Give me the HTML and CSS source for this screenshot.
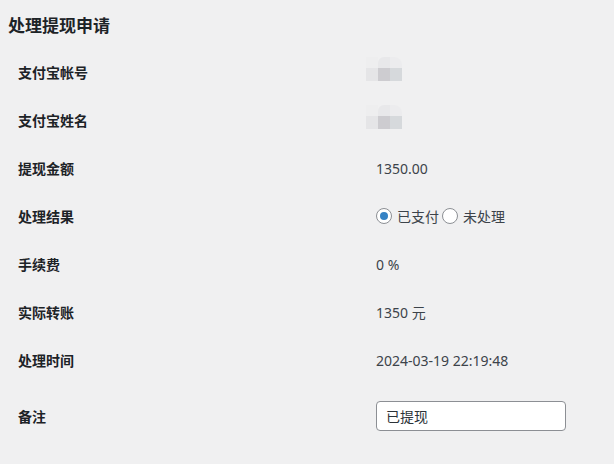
FILE: index.html
```html
<!DOCTYPE html>
<html lang="zh-CN">
<head>
    <meta charset="UTF-8">
    <meta name="viewport" content="width=device-width, initial-scale=1.0">
    <title>处理提现申请</title>
    <link rel="stylesheet" href="styles.css">
</head>
<body>

<div class="wrap">
    <h2>处理提现申请</h2>

    <div class="form-table">
        <div class="row">
            <div class="th">支付宝帐号</div>
            <div class="td"><div class="blurred"><span class="c1"></span><span class="c2"></span><span class="c3"></span><span class="c4"></span><span class="c5"></span><span class="c6"></span></div></div>
        </div>
        <div class="row">
            <div class="th">支付宝姓名</div>
            <div class="td"><div class="blurred"><span class="c1"></span><span class="c2"></span><span class="c3"></span><span class="c4"></span><span class="c5"></span><span class="c6"></span></div></div>
        </div>
        <div class="row">
            <div class="th">提现金额</div>
            <div class="td">1350.00</div>
        </div>
        <div class="row">
            <div class="th">处理结果</div>
            <div class="td">
                <label class="radio"><span class="dot checked"></span>已支付</label>
                <label class="radio"><span class="dot"></span>未处理</label>
            </div>
        </div>
        <div class="row">
            <div class="th">手续费</div>
            <div class="td">0 %</div>
        </div>
        <div class="row">
            <div class="th">实际转账</div>
            <div class="td">1350 元</div>
        </div>
        <div class="row">
            <div class="th">处理时间</div>
            <div class="td">2024-03-19 22:19:48</div>
        </div>
        <div class="row last">
            <div class="th">备注</div>
            <div class="td"><input class="regular-text" type="text" value="已提现"></div>
        </div>
    </div>
</div>

</body>
</html>
```

FILE: styles.css
```css
body {
    margin: 0;
    background-color: #f0f0f1;
    color: #3c434a;
    font-family: "Noto Sans", "Noto Sans CJK SC", sans-serif;
    font-size: 14px;
}
.wrap {
    padding: 0 8px;
}
h2 {
    margin: 0;
    height: 48px;
    display: flex;
    align-items: center;
    font-size: 17px;
    font-weight: 700;
    color: #1d2327;
}
.row {
    display: flex;
    align-items: center;
    height: 48px;
}
.row.last {
    height: 64px;
}
.th {
    width: 368px;
    flex-shrink: 0;
    padding-left: 10px;
    box-sizing: border-box;
    font-weight: 700;
    color: #1d2327;
}
.td {
    display: flex;
    align-items: center;
}
.blurred {
    display: grid;
    grid-template-columns: repeat(3, 12px);
    grid-template-rows: 11px 13px;
    margin-left: -10px;
    margin-top: -6px;
    filter: blur(0.6px);
}
.blurred span {
    display: block;
}
.blurred .c1 { background: #eeeeef; }
.blurred .c2 { background: #e8e8ea; border-top-left-radius: 6px; }
.blurred .c3 { background: #ececee; border-top-right-radius: 8px; }
.blurred .c4 { background: #e5e5e7; }
.blurred .c5 { background: #cdccd0; }
.blurred .c6 { background: #d6d9dc; }
.radio {
    display: flex;
    align-items: center;
    margin-right: 3px;
}
.dot {
    width: 14px;
    height: 14px;
    border: 1px solid #8c8f94;
    border-radius: 50%;
    background: #fff;
    margin-right: 5px;
    display: flex;
    align-items: center;
    justify-content: center;
}
.dot.checked::before {
    content: "";
    width: 8px;
    height: 8px;
    border-radius: 50%;
    background: #3582c4;
}
.regular-text {
    width: 190px;
    height: 30px;
    box-sizing: border-box;
    padding: 0 9px;
    border: 1px solid #8c8f94;
    border-radius: 4px;
    background: #fff;
    font-family: "Noto Sans", "Noto Sans CJK SC", sans-serif;
    font-size: 14px;
    color: #2c3338;
}
```
